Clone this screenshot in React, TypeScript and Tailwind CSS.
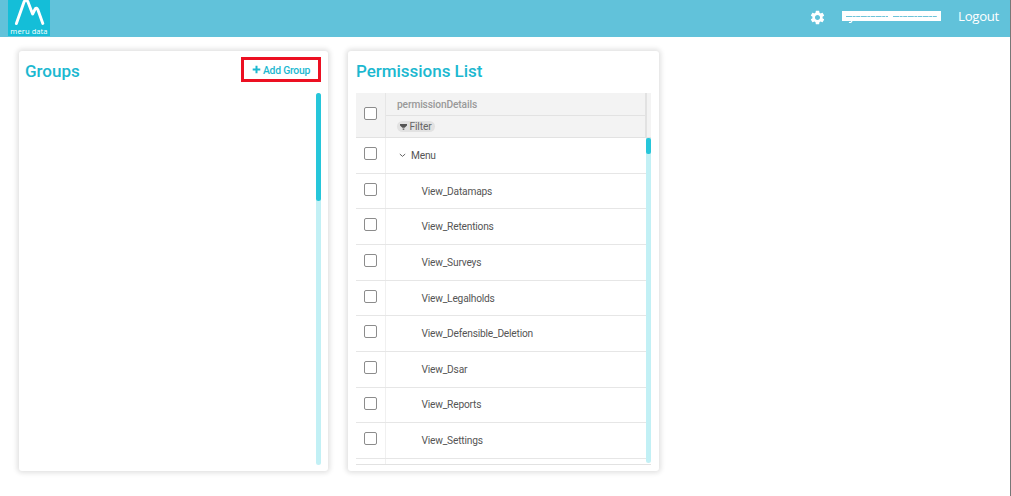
import React from "react";

const permissions = [
  "View_Datamaps",
  "View_Retentions",
  "View_Surveys",
  "View_Legalholds",
  "View_Defensible_Deletion",
  "View_Dsar",
  "View_Reports",
  "View_Settings",
];

function Checkbox() {
  return <span className="block h-[13px] w-[13px] rounded-[2px] border border-[#8c8c8c] bg-white" />;
}

function Logo() {
  return (
    <div className="flex h-[36px] w-[42px] flex-col items-center bg-[#14bed8]">
      <svg width="42" height="26" viewBox="0 0 42 26" fill="none" className="shrink-0">
        <path
          d="M8.4 23.6 L16 2 Q18 -1.6 20 2 L24.6 14 L27.2 8.8 Q28.6 7.2 29.8 9.6 L34.8 23.4"
          stroke="#fff"
          strokeWidth="2.9"
          strokeLinecap="round"
          strokeLinejoin="round"
        />
      </svg>
      <span className="font-['Open_Sans',sans-serif] text-[7.5px] leading-[10px] font-medium tracking-[0.1px] whitespace-nowrap text-white">
        meru data
      </span>
    </div>
  );
}

function Gear() {
  return (
    <svg width="17" height="17" viewBox="0 0 24 24" fill="#fff">
      <path d="M19.14 12.94c.04-.3.06-.61.06-.94 0-.32-.02-.64-.07-.94l2.03-1.58a.49.49 0 0 0 .12-.61l-1.92-3.32a.488.488 0 0 0-.59-.22l-2.39.96c-.5-.38-1.03-.7-1.62-.94l-.36-2.54a.484.484 0 0 0-.48-.41h-3.84c-.24 0-.43.17-.47.41l-.36 2.54c-.59.24-1.13.57-1.62.94l-2.39-.96c-.22-.08-.47 0-.59.22L2.74 8.87c-.12.21-.08.47.12.61l2.03 1.58c-.05.3-.09.63-.09.94s.02.64.07.94l-2.03 1.58a.49.49 0 0 0-.12.61l1.92 3.32c.12.22.37.29.59.22l2.39-.96c.5.38 1.03.7 1.62.94l.36 2.54c.05.24.24.41.48.41h3.84c.24 0 .44-.17.47-.41l.36-2.54c.59-.24 1.13-.56 1.62-.94l2.39.96c.22.08.47 0 .59-.22l1.92-3.32c.12-.22.07-.47-.12-.61l-2.01-1.58zM12 15.6c-1.98 0-3.6-1.62-3.6-3.6s1.62-3.6 3.6-3.6 3.6 1.62 3.6 3.6-1.62 3.6-3.6 3.6z" />
    </svg>
  );
}

function Row({ children }: { children: React.ReactNode }) {
  return (
    <div className="flex h-[35.67px] shrink-0 border-b-[1.5px] border-[#e6e6e6]">
      <div className="w-[30px] shrink-0 border-r border-[#f0f0f0] pt-[9px] pl-2">
        <Checkbox />
      </div>
      <div className="flex flex-1 items-center pt-[0.4px] text-[10.2px] tracking-[-0.2px] text-[#555]">{children}</div>
    </div>
  );
}

export default function App() {
  return (
    <div className="h-[496px] w-[1011px] overflow-hidden border-r border-[#777] bg-white font-[Roboto,sans-serif]">
      <header className="flex h-[37px] items-start bg-[#61c2da] pl-2">
        <Logo />
        <div className="ml-auto flex items-start pr-[11px]">
          <div className="mt-[9px]">
            <Gear />
          </div>
          <div className="mt-[11px] ml-[16px] flex h-[10px] w-[99px] flex-col items-center bg-white pt-1">
            <svg width="91" height="3" viewBox="0 0 91 3" className="shrink-0">
              <path d="M0 1.5H42M47 1.5H91" stroke="#6cc4da" strokeWidth="1" strokeDasharray="6 0.6 3 0.6 4 0.6" />
            </svg>
            <svg width="91" height="6" viewBox="0 0 91 6" className="shrink-0">
              <path d="M3 4.2Q5 5.2 6 3" stroke="#fff" strokeWidth="1.2" fill="none" />
            </svg>
          </div>
          <a className="mt-[6px] ml-[17px] font-['Open_Sans',sans-serif] text-[13.2px] leading-5 tracking-[-0.3px] text-white">
            Logout
          </a>
        </div>
      </header>

      <main className="flex gap-5 pt-[14px] pl-[18.5px]">
        <section className="flex h-[420px] w-[309.5px] flex-col rounded-[3px] bg-white pr-[7px] pl-[6.5px] shadow-[0_0_5px_2px_rgba(0,0,0,0.12)]">
          <div className="flex h-[42px] shrink-0 items-start justify-between">
            <h2 className="mt-[8px] text-[17px] leading-6 font-medium text-[#1cb8d0]">Groups</h2>
            <button className="mt-[6px] flex h-[25px] w-[80px] items-center justify-center gap-[2px] border-[3px] border-[#ec1022] text-[10.4px] font-medium tracking-[-0.25px] text-[#1cb8d0]">
              <svg width="9" height="9" viewBox="0 0 9 9">
                <path d="M4.5 0.7V8.3M0.7 4.5H8.3" stroke="#1cb8d0" strokeWidth="2" />
              </svg>
              <span className="pt-[2px] leading-[12px] whitespace-nowrap">Add Group</span>
            </button>
          </div>
          <div className="ml-auto h-[372px] w-[5px] rounded-full bg-[#c2f0f5]">
            <div className="h-[108px] rounded-full bg-[#26c6da]" />
          </div>
        </section>

        <section className="flex h-[420px] w-[311px] flex-col rounded-[3px] bg-white px-[8px] shadow-[0_0_5px_2px_rgba(0,0,0,0.12)]">
          <div className="h-[42px] shrink-0">
            <h2 className="pt-[8px] text-[17px] leading-6 font-medium tracking-[-0.03px] text-[#1cb8d0]">
              Permissions List
            </h2>
          </div>
          <div className="flex h-[372px] w-[295px] flex-col overflow-hidden border-b border-[#e2e2e2]">
            <div className="flex h-[45px] shrink-0 border-b-[1.5px] border-[#e2e2e2] bg-[#f3f3f3]">
              <div className="w-[30px] border-r border-[#e6e6e6] pt-[14px] pl-2">
                <Checkbox />
              </div>
              <div className="flex flex-1 flex-col border-r-2 border-[#e2e2e2]">
                <div className="flex h-[22.5px] items-center border-b border-[#e2e2e2] pt-px pl-[11px] text-[10.2px] font-medium tracking-[-0.13px] text-[#999]">
                  permissionDetails
                </div>
                <div className="flex flex-1 items-center pt-px pl-[11px]">
                  <span className="flex h-[11px] w-[38px] items-center justify-center gap-[2px] rounded-full bg-[#e2e2e2] text-[10.2px] leading-none tracking-[-0.1px] text-[#666]">
                    <svg width="7" height="6" viewBox="0 0 7 6" fill="#555">
                      <path d="M0 0H7V1.4L4.6 3.8H2.4L0 1.4ZM2.7 4.4H4.3V5.7H2.7Z" />
                    </svg>
                    Filter
                  </span>
                </div>
              </div>
              <div className="w-[4px]" />
            </div>
            <div className="flex min-h-0 flex-1">
              <div className="flex flex-1 flex-col overflow-hidden">
                <Row>
                  <svg width="7" height="5" viewBox="0 0 7 5" fill="none" className="ml-[13px]">
                    <path d="M0.8 1L3.5 3.4L6.2 1" stroke="#666" strokeWidth="1" />
                  </svg>
                  <span className="ml-[5px]">Menu</span>
                </Row>
                {permissions.map((name) => (
                  <Row key={name}>
                    <span className="ml-[35.5px]">{name}</span>
                  </Row>
                ))}
                <div className="h-[6px] w-[30px] shrink-0 border-r border-[#f0f0f0]" />
              </div>
              <div className="h-[325px] w-[5px] rounded-b-full bg-[#c2f0f5]">
                <div className="h-[16px] rounded-[2px] bg-[#26c6da]" />
              </div>
            </div>
          </div>
        </section>
      </main>
    </div>
  );
}
